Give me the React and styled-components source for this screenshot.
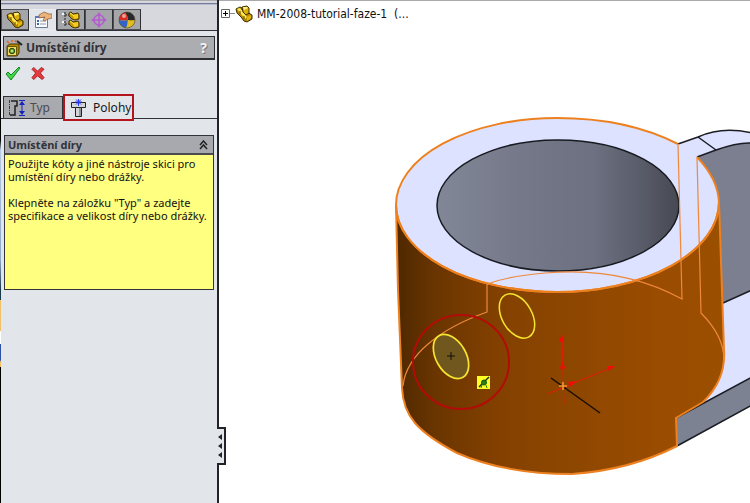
import React from "react";
import styled, { createGlobalStyle } from "styled-components";

const GlobalStyle = createGlobalStyle`
  * { box-sizing: border-box; }
  body { margin: 0; background: #fff; }
  button { font: inherit; color: inherit; margin: 0; padding: 0; }
  svg { display: block; }
`;

const Page = styled.div`
  display: flex;
  min-height: 100vh;
  font: 12px/13px "Noto Sans", "Open Sans", sans-serif;
  color: #111;
`;

const DesktopEdge = styled.div`
  flex: 0 0 1px;
  background: linear-gradient(
    #000 140px, #b5c9df 150px, #8fa9c8 260px, #17394a 290px, #17394a 300px,
    #efbf6a 300px, #efbf6a 331px, #fff 331px, #fff 344px, #2e50a5 344px,
    #2e50a5 360px, #efbf6a 362px, #efbf6a 367px, #000 367px
  );
`;

const Panel = styled.aside`
  position: relative;
  flex: 0 0 218px;
  background: #e2e5ea;
  border-right: 2px solid #222329;
`;

const Splitter = styled.button`
  position: absolute;
  right: -9px;
  top: 427px;
  width: 9px;
  height: 38px;
  display: grid;
  place-items: center;
  background: #e2e5ea;
  border: 2px solid #222329;
  border-left: 0;
`;

const TopEdge = styled.div`
  height: 5px;
  background: linear-gradient(#a9a9ac 1px, #d5d7de 1px, #d5d7de 3px, #73799a 3px, #73799a 4px, #b9bccb 4px);
`;

const ManagerTabs = styled.nav`
  display: flex;
  align-items: flex-end;
  height: 26px;
  background: #d6d8de;
  border-bottom: 1px solid #303136;
`;

const ManagerTab = styled.button`
  display: grid;
  place-items: center;
  width: 28px;
  height: ${(p) => (p.$active ? 22 : 21)}px;
  margin-bottom: ${(p) => (p.$active ? -1 : 0)}px;
  background: ${(p) => (p.$active ? "#e2e5ea" : "#a5a6aa")};
  border: 1px solid ${(p) => (p.$active ? "#e9ebef" : "#4d4e53")};
  border-right-color: #303136;
`;

const TitleBar = styled.header`
  display: flex;
  align-items: center;
  gap: 3px;
  height: 24px;
  margin: 5px 2px 0 2px;
  padding: 0 7px 0 2px;
  background: #acadb1;
  border: 1px solid #2c2d31;
  border-bottom-width: 2px;
`;

const Title = styled.h1`
  flex: 1;
  margin: 0;
  font: bold 12px/20px "Noto Sans", sans-serif;
  color: #303238;
`;

const PlainButton = styled.button`
  display: grid;
  place-items: center;
  background: none;
  border: 0;
`;

const HelpButton = styled(PlainButton)`
  font: bold 14px/20px "Noto Sans", sans-serif;
  color: #f2f2f4;
  text-shadow: 1px 1px 0 #77787c;
`;

const Confirm = styled.div`
  display: flex;
  gap: 10px;
  padding: 6px 4px 0;
  height: 35px;
  align-items: flex-start;
`;

const PageTabs = styled.div`
  display: flex;
  align-items: flex-end;
  height: 24px;
  padding-left: 2px;
  border-bottom: 1px solid #303136;
`;

const PageTab = styled.button`
  display: flex;
  align-items: center;
  gap: ${(p) => (p.$active ? 6 : 4)}px;
  width: ${(p) => (p.$active ? 71 : 60)}px;
  height: ${(p) => (p.$active ? 27 : 22)}px;
  margin-bottom: ${(p) => (p.$active ? -3 : 0)}px;
  padding-left: ${(p) => (p.$active ? 5 : 4)}px;
  z-index: ${(p) => (p.$active ? 1 : 0)};
  color: ${(p) => (p.$active ? "#17181b" : "#4a4b50")};
  background: ${(p) => (p.$active ? "#e2e5ea" : "#a9aaae")};
  border: ${(p) => (p.$active ? "2px solid #b4141d" : "1px solid #303136")};
  border-bottom-width: ${(p) => (p.$active ? 2 : 0)}px;
`;

const Group = styled.section`
  margin: 16px 3px 0;
  border: 1px solid #33343a;
`;

const GroupHeader = styled.div`
  display: flex;
  align-items: center;
  justify-content: space-between;
  height: 19px;
  padding: 0 5px 0 3px;
  background: #a8a9ae;
  border-bottom: 2px solid #4a4b4c;
`;

const GroupTitle = styled.h2`
  margin: 0;
  font: bold 11px/16px "Noto Sans", sans-serif;
  color: #303238;
`;

const Message = styled.div`
  min-height: 134px;
  padding: 2px 3px;
  background: #ffff80;
  font-size: 11px;
  white-space: nowrap;
`;

const Paragraph = styled.p`
  margin: 0 0 13px;
`;

const Viewport = styled.main`
  display: grid;
  flex: 1;
  min-width: 0;
  border-top: 1px solid #a9a9ac;
  background: #fff;
`;

const Tree = styled.div`
  grid-area: 1 / 1;
  z-index: 1;
  display: flex;
  align-items: center;
  align-self: start;
  height: 26px;
  padding-left: 2px;
  font: 12px/14px "DejaVu Sans Condensed", "DejaVu Sans", sans-serif;
`;

const TreeLabel = styled.span`
  margin-left: 4px;
  white-space: pre;
`;

const Model = styled.svg`
  grid-area: 1 / 1;
  width: 100%;
  height: 100%;
  min-height: 0;
`;

const PartIcon = () => (
  <svg width="18" height="18" viewBox="0 0 18 18" strokeLinejoin="round" aria-hidden="true">
    <path d="M1 4L5 2L7 3V6L10 9L12 7L17 10V14L12 17L9 16L6 12L2 8Z" fill="#b78900" stroke="#3d2e00" />
    <path d="M2 4L5 3L12 12L10 14L6 9Z" fill="#ffe44c" />
    <path d="M7 2L12 1L14 3V8L11 10L8 7Z" fill="#dcae08" stroke="#3d2e00" />
    <path d="M8 2L12 2L13 3L9 5Z" fill="#fff087" />
    <path d="M12 12L16 10V13L12 16Z" fill="#e5b80d" />
    <path d="M5 6V9M9 11V14" stroke="#5d4600" />
  </svg>
);

const PropertyIcon = () => (
  <svg width="18" height="18" viewBox="0 0 18 18" aria-hidden="true">
    <path d="M1.500 5.500h12v11h-12z" fill="#f8faff" stroke="#6a7795" />
    <path d="M1 5h13v2H1z" fill="#5978b7" />
    <path d="M3 10h2M3 13h2" stroke="#3c65ab" strokeWidth="2" />
    <path d="M6 10h6M6 13h6" stroke="#999" />
    <path d="M5 4l5-3 5 2h3v4l-4 1-4 2-1-1 2-3-6 1z" fill="#eab37c" stroke="#8a5730" strokeWidth=".7" />
  </svg>
);

const ConfigIcon = () => (
  <svg width="20" height="18" viewBox="0 0 20 18" strokeLinejoin="round" aria-hidden="true">
    <path d="M4 1v14M4 4h5M4 13h5" stroke="#222" strokeDasharray="2 1" />
    <path d="M1 3h2M1 11h2" stroke="#f4f4f4" strokeWidth="2" />
    {[0, 8].map((y) => (
      <g key={y} transform={`translate(0 ${y})`}>
        <path d="M8 2L10 1L12 3L17 2L18 4V8L14 9L11 8L8 5Z" fill="#c99c00" stroke="#453600" />
        <path d="M12 4L17 3V7L13 8Z" fill="#f4cc24" />
        <path d="M9 2L13 5" stroke="#ffe95e" />
      </g>
    ))}
  </svg>
);

const TargetIcon = () => (
  <svg width="18" height="18" viewBox="0 0 18 18" fill="none" stroke="#b55bd2" aria-hidden="true">
    <circle cx="9" cy="9" r="5" strokeWidth="1.500" />
    <path d="M9 2v14M2 9h14" strokeWidth="1.500" />
    <path d="M9 1L7 4h4zM9 17L7 14h4zM1 9l3-2v4zM17 9l-3-2v4z" fill="#b55bd2" stroke="none" />
  </svg>
);

const SphereIcon = () => (
  <svg width="18" height="18" viewBox="0 0 18 18" aria-hidden="true">
    <circle cx="9" cy="9" r="8" fill="#edc42b" />
    <path d="M9 1a8 8 0 0 1 8 8q-4 1-7 0Q10 5 7 1.300z" fill="#27282d" />
    <path d="M7 1.300Q10 5 10 9q-5 1-9 0a8 8 0 0 1 6-7.700z" fill="#d72c23" />
    <path d="M1 9q5 1 9 0 0 5-2 8a8 8 0 0 1-7-8z" fill="#3266c6" />
    <path d="M10 9q4 1 7 0a8 8 0 0 1-9 8q2-3 2-8z" fill="#e3bc20" />
    <circle cx="6" cy="5" r="2" fill="#fff" opacity=".55" />
    <circle cx="9" cy="9" r="8" fill="none" stroke="#4e4941" strokeWidth=".7" />
  </svg>
);

const WizardIcon = () => (
  <svg width="17" height="18" viewBox="0 0 17 18" aria-hidden="true">
    <path d="M1 7l3-2h9v9l-2 3H1z" fill="#b98a00" stroke="#493900" />
    <path d="M1.500 7.500h9v9h-9z" fill="#f0d95f" stroke="#6b5600" />
    <circle cx="6" cy="12" r="2.700" fill="#69a633" stroke="#234814" />
    <circle cx="6" cy="12" r="1" fill="#d5f09f" />
    <path d="M1 2l2 2M6 1v2M10 1l-1 2" stroke="#e36320" strokeWidth="1.500" />
    <path d="M11 2l5 4" stroke="#222" strokeWidth="2" />
  </svg>
);

const CheckIcon = () => (
  <svg width="16" height="15" viewBox="0 0 16 15" aria-hidden="true">
    <path d="M1 8l2-2 3 3 8-8 1 1-9 12z" fill="#42d848" stroke="#138825" strokeLinejoin="round" />
  </svg>
);

const CrossIcon = () => (
  <svg width="14" height="15" viewBox="0 0 15 15" aria-hidden="true">
    <path d="M1 3l2-2 4 4 4-4 3 2-4 4 4 5-2 2-5-4-4 4-2-2 4-5z" fill="#e63b3d" stroke="#a51d23" strokeLinejoin="round" />
  </svg>
);

const TypeIcon = () => (
  <svg width="18" height="18" viewBox="0 0 18 18" fill="none" aria-hidden="true">
    <path d="M1.500 1v16" stroke="#2335a6" strokeDasharray="3 1 1 1" />
    <path d="M3 2H9V7H7V16H2" stroke="#222" strokeWidth="1.500" />
    <path d="M11 1.500h6M11 16.500h6M14 3v12" stroke="#1723bd" />
    <path d="M14 2L11 6H17ZM14 16L11 12H17Z" fill="#1723bd" />
  </svg>
);

const PositionIcon = () => (
  <svg width="17" height="19" viewBox="0 0 17 19" aria-hidden="true">
    <path d="M1.500 4.500h14v5h-4v9h-6v-9h-4z" fill="#d3d4d6" stroke="#222" />
    <path d="M5.500 9.500h6" stroke="#222" />
    <path d="M9 10h2v8H9z" fill="#96979b" />
    <path d="M8.500 1v7M5 4h7M6 1.500l5 5M11 1.500l-5 5" stroke="#2438ff" />
  </svg>
);

const CollapseIcon = () => (
  <svg width="9" height="10" viewBox="0 0 9 10" fill="none" stroke="#222" strokeWidth="1.500" aria-hidden="true">
    <path d="M1 5l3.500-4L8 5M1 9l3.500-4L8 9" />
  </svg>
);

const ExpandIcon = () => (
  <svg width="14" height="10" viewBox="0 0 14 10" fill="none" aria-hidden="true">
    <path d="M.5 .5h8v8h-8z" fill="#fff" stroke="#666" />
    <path d="M2 4.500h5M4.500 2v5" stroke="#000" />
    <path d="M9 4.500h5" stroke="#888" />
  </svg>
);

const ArrowsIcon = () => (
  <svg width="5" height="26" viewBox="0 0 5 26" aria-hidden="true">
    <path d="M4 1v6L0 4zM4 10v6l-4-3zM4 19v6l-4-3z" fill="#222329" />
  </svg>
);

const managerTabs = [
  { label: "FeatureManager", Icon: PartIcon },
  { label: "PropertyManager", Icon: PropertyIcon, active: true },
  { label: "ConfigurationManager", Icon: ConfigIcon },
  { label: "DimXpertManager", Icon: TargetIcon },
  { label: "DisplayManager", Icon: SphereIcon },
];

const rim = "M678 144Q627 118 557 118A161 87 0 0 0 396 205A161 87 0 0 0 557 292A162 90 0 0 0 719 202Q718 179 697 157";
const body =
  "M396 205L398 290L402 388Q403 409 415 423Q427 437 457 453Q505 474 572 474Q630 470 677 446L676 418L703 402Q726 380 724 350L719 202A162 90 0 0 1 557 292A161 87 0 0 1 396 205Z";

const CylinderModel = () => (
  <Model viewBox="219 1 531 502" preserveAspectRatio="xMinYMin meet" fill="none" role="img" aria-label="3D model">
    <defs>
      <linearGradient id="shell">
        <stop offset="0" stopColor="#4e2800" />
        <stop offset=".12" stopColor="#6a3500" />
        <stop offset=".3" stopColor="#824000" />
        <stop offset=".5" stopColor="#8c4600" />
        <stop offset=".8" stopColor="#9a4c00" />
        <stop offset="1" stopColor="#9b4f00" />
      </linearGradient>
      <linearGradient id="bore">
        <stop offset="0" stopColor="#828797" />
        <stop offset=".35" stopColor="#747889" />
        <stop offset=".65" stopColor="#6c7080" />
        <stop offset=".85" stopColor="#585b68" />
        <stop offset="1" stopColor="#464852" />
      </linearGradient>
    </defs>
    <path d="M676 418L752 377V290L723 303L719 250H700Z" fill="#dce2ff" />
    <path d="M676 418L752 377V405L677 446Z" fill="#7d8292" />
    <path d="M697 157L716 150Q738 142 752 143V290L723 303L712 220Z" fill="#7b7f90" />
    <path d="M678 144L698 137Q722 126 752 133V143Q738 142 716 150L697 157L690 190Z" fill="#dce2ff" />
    <path
      d="M678 144L698 137Q722 126 752 133M697 157L716 150Q738 142 752 143M698 137L716 150M723 303L752 290M676 418L752 377M677 446L752 405"
      stroke="#1b1d23"
      strokeWidth="1.500"
    />
    <path d={rim} fill="#dce2ff" />
    <path d={body} fill="url(#shell)" stroke="#ed801f" strokeWidth="2" />
    <path d={rim} stroke="#ed801f" strokeWidth="2" />
    <ellipse cx="558" cy="205.500" rx="121" ry="65.500" fill="url(#bore)" stroke="#181a20" strokeWidth="1.500" />
    <path
      d="M678 144L682 299Q622 266 545 273Q509 276 487 284V312C442 328 406 354 403 386M697 157L701 313C716 328 724 345 724 360"
      stroke="#ee883a"
      strokeWidth="1.200"
    />
    <ellipse cx="517" cy="316" rx="15" ry="24" transform="rotate(-30 517 316)" stroke="#f5e530" strokeWidth="1.500" />
    <ellipse cx="451" cy="356.500" rx="15" ry="24" transform="rotate(-30 451 356.500)" fill="#70571d" stroke="#f5e530" strokeWidth="1.700" />
    <path d="M447 356h8M451 352v8" stroke="#111" />
    <ellipse cx="461" cy="362" rx="48" ry="47" stroke="#b30b08" strokeWidth="2" />
    <path d="M477 376h13v13h-13z" fill="#ffff24" />
    <path d="M479 387L489 377" stroke="#1b3215" strokeWidth="1.500" />
    <circle cx="484" cy="382.500" r="2.500" fill="#25801c" stroke="#174e12" />
    <path d="M481 388q0-2 3-5q3 3 3 5" stroke="#27821f" />
    <path d="M551 378L600 413" stroke="#160d05" strokeWidth="1.500" />
    <path d="M562 337L564 404M547 394L613 367" stroke="#e51b08" />
    <path d="M562 334l-3 8h5zM563 361l-3 7q3 3 5 0zM615 366l-8 0 2 5zM577 381l-9 1 2 5z" fill="#f00d08" />
    <path d="M559 386h8M563 382v8" stroke="#f59a35" strokeWidth="1.500" />
  </Model>
);

export default function App() {
  return (
    <>
      <GlobalStyle />
      <Page>
        <DesktopEdge />
        <Panel>
          <TopEdge />
          <ManagerTabs>
            {managerTabs.map(({ label, Icon, active }) => (
              <ManagerTab key={label} type="button" aria-label={label} $active={active}>
                <Icon />
              </ManagerTab>
            ))}
          </ManagerTabs>
          <TitleBar>
            <WizardIcon />
            <Title>Umístění díry</Title>
            <HelpButton type="button">?</HelpButton>
          </TitleBar>
          <Confirm>
            <PlainButton type="button" aria-label="OK"><CheckIcon /></PlainButton>
            <PlainButton type="button" aria-label="Storno"><CrossIcon /></PlainButton>
          </Confirm>
          <PageTabs role="tablist">
            <PageTab type="button" role="tab" aria-selected="false"><TypeIcon />Typ</PageTab>
            <PageTab type="button" role="tab" aria-selected="true" $active><PositionIcon />Polohy</PageTab>
          </PageTabs>
          <Group>
            <GroupHeader>
              <GroupTitle>Umístění díry</GroupTitle>
              <PlainButton type="button" aria-label="Sbalit"><CollapseIcon /></PlainButton>
            </GroupHeader>
            <Message>
              <Paragraph>Použijte kóty a jiné nástroje skici pro<br />umístění díry nebo drážky.</Paragraph>
              <Paragraph>Klepněte na záložku "Typ" a zadejte<br />specifikace a velikost díry nebo drážky.</Paragraph>
            </Message>
          </Group>
          <Splitter type="button" aria-label="Skrýt panel"><ArrowsIcon /></Splitter>
        </Panel>
        <Viewport>
          <Tree>
            <PlainButton type="button" aria-label="Rozbalit"><ExpandIcon /></PlainButton>
            <PartIcon />
            <TreeLabel>MM-2008-tutorial-faze-1  (...</TreeLabel>
          </Tree>
          <CylinderModel />
        </Viewport>
      </Page>
    </>
  );
}
